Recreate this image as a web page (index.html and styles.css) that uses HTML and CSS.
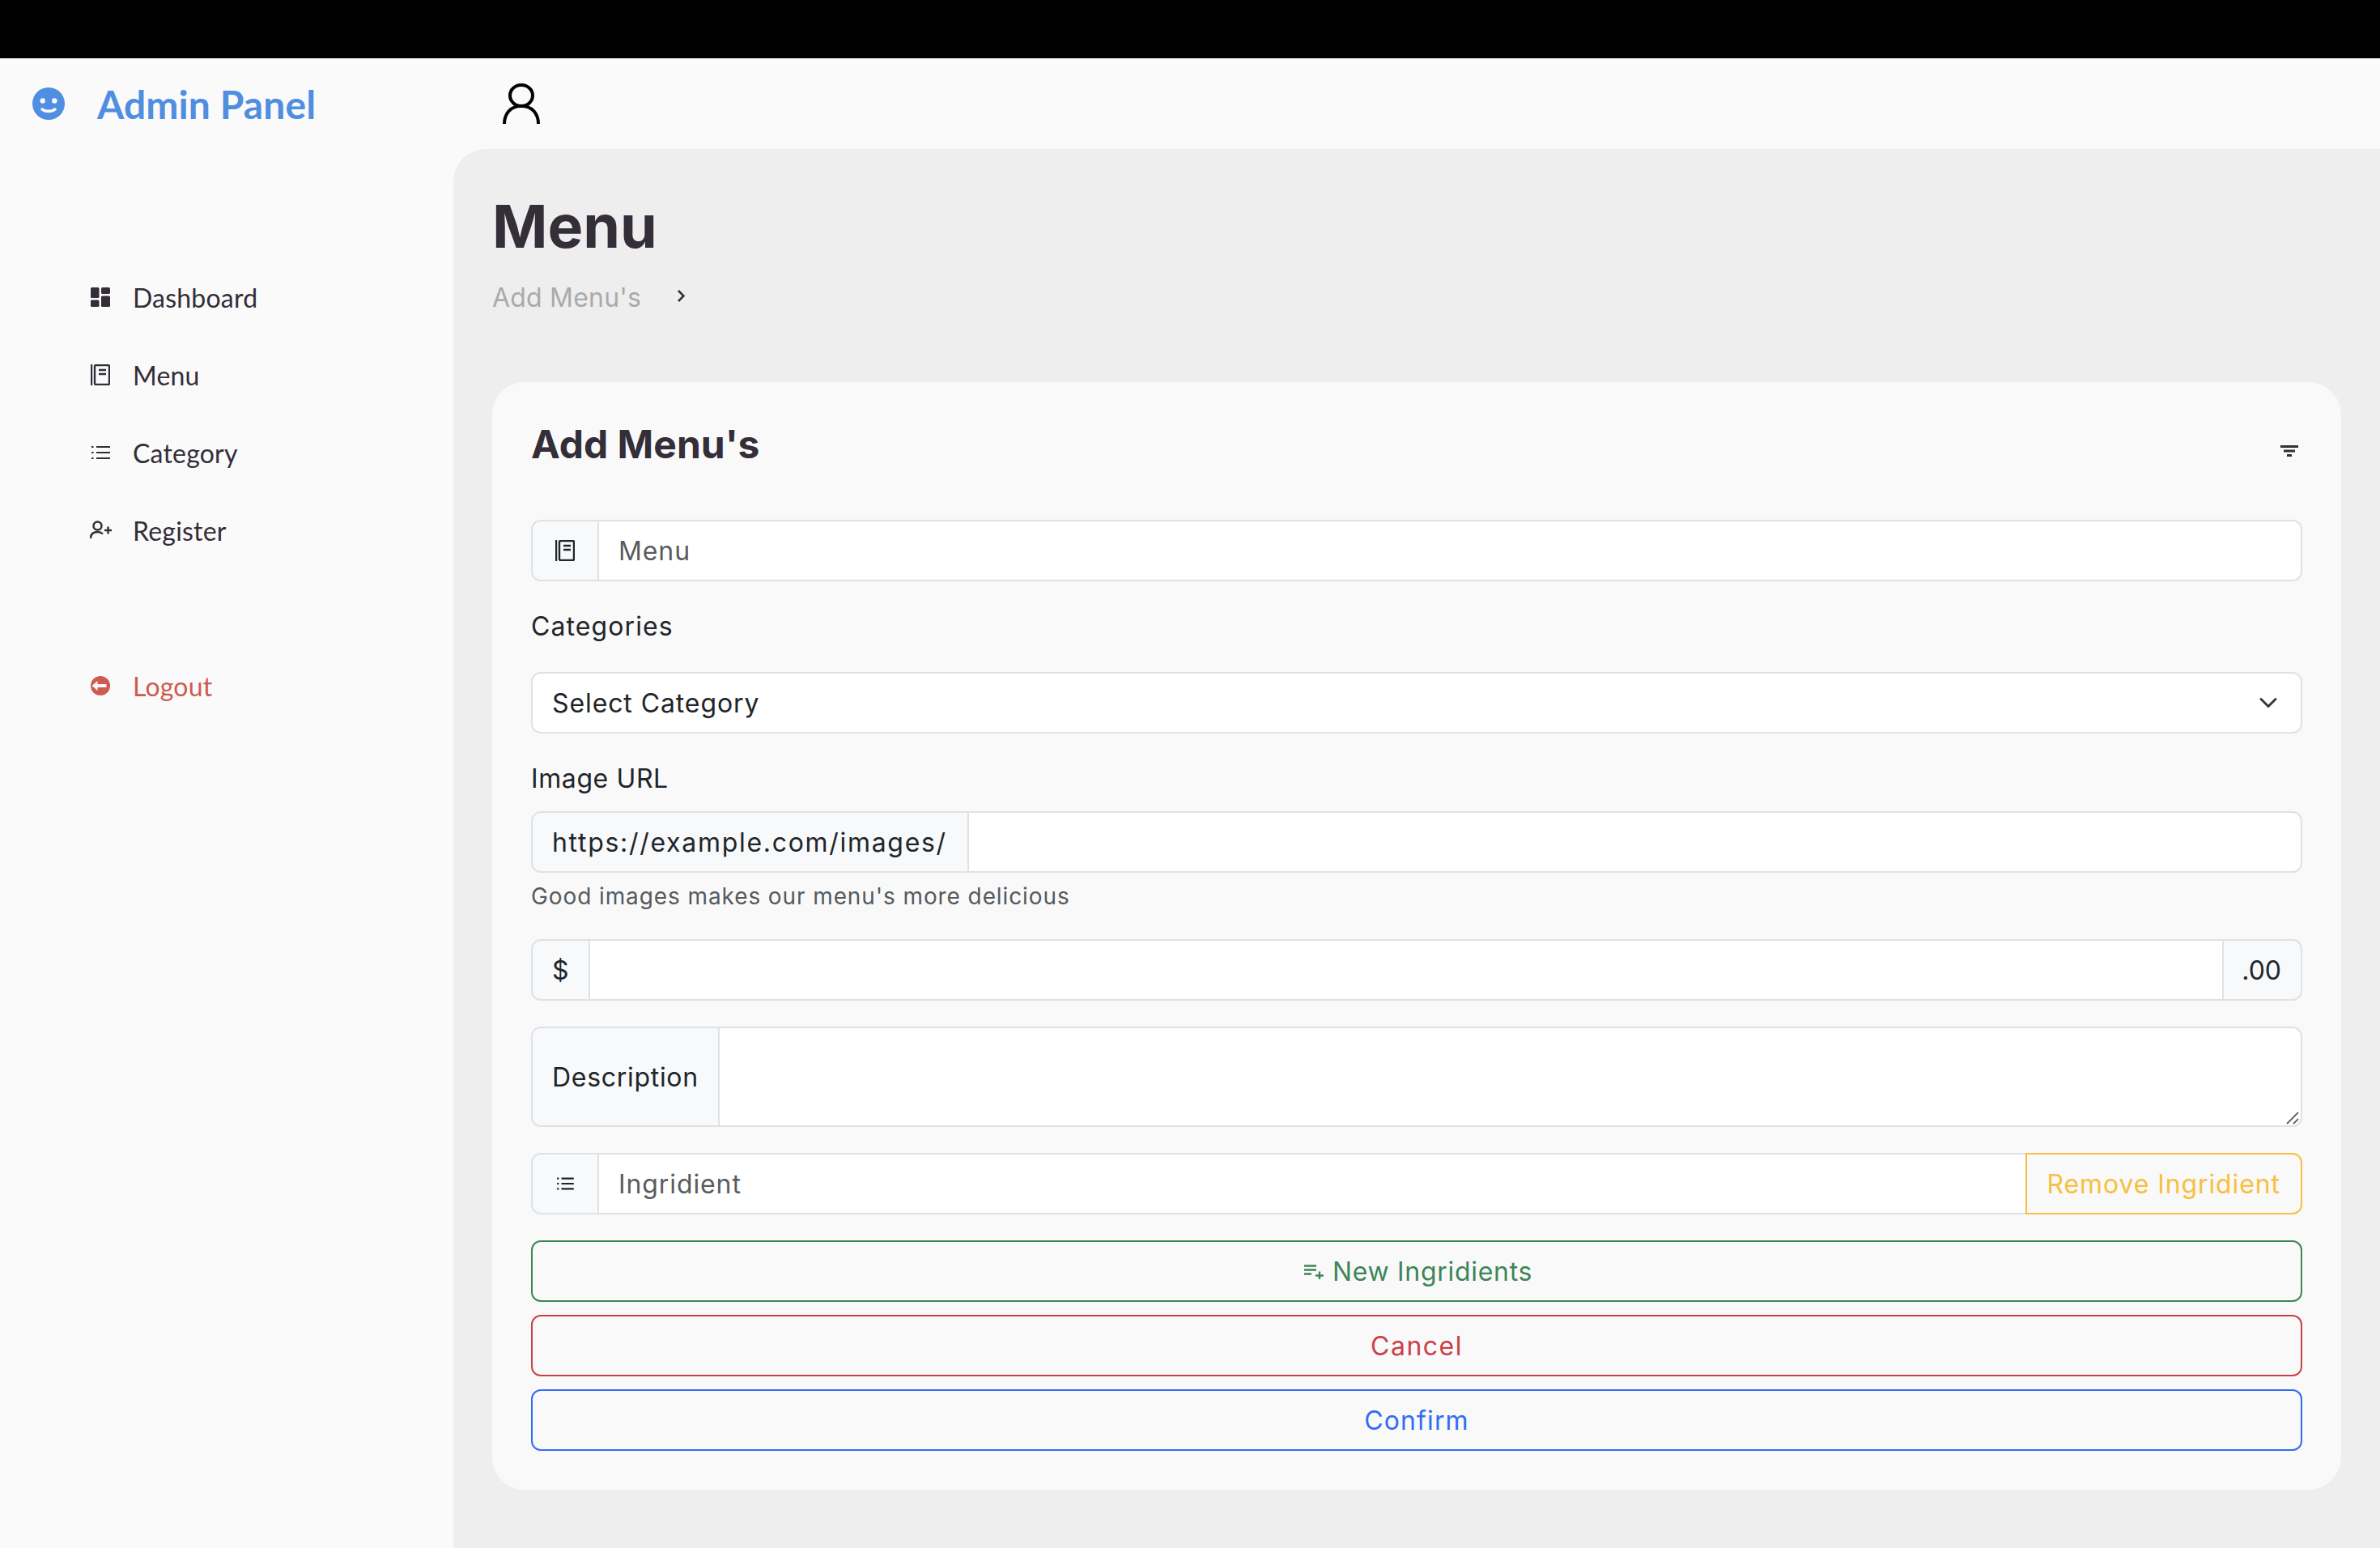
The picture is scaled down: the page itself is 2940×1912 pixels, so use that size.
FILE: index.html
```html
<!DOCTYPE html>
<html lang="en">
<head>
    <meta charset="UTF-8">
    <title>Admin Panel</title>
    <link rel="stylesheet" href="styles.css">
</head>
<body>

    <div class="top-strip"></div>

    <div class="shell">
        <div class="brand">
            <svg class="brand-icon" viewBox="0 0 40 40">
                <circle cx="20" cy="20" r="20" fill="#4f8ee0"/>
                <circle cx="12.7" cy="16.5" r="3.2" fill="#fafafa"/>
                <circle cx="27.3" cy="16.5" r="3.2" fill="#fafafa"/>
                <path d="M11 26c4.500 4.500 13.500 4.500 18 0" fill="none" stroke="#fafafa" stroke-width="3.6"/>
            </svg>
            <span class="brand-name">Admin Panel</span>
        </div>

        <div class="topbar">
            <svg class="user-icon" viewBox="0 0 46 50" fill="none" stroke="#000" stroke-width="4">
                <ellipse cx="23" cy="15" rx="14" ry="13"/>
                <path d="M2 50c0-13 8-22 21-22s21 9 21 22"/>
            </svg>
        </div>

        <nav class="sidebar">
            <a class="nav-item">
                <svg class="nav-icon" viewBox="0 0 24 24" fill="#332e38">
                    <rect x="0" y="0" width="10.500" height="13" rx="1.500"/>
                    <rect x="0" y="15.500" width="10.500" height="8.500" rx="1.500"/>
                    <rect x="13" y="0" width="11" height="8" rx="1.500"/>
                    <rect x="13" y="10.500" width="11" height="13.500" rx="1.500"/>
                </svg>
                Dashboard
            </a>
            <a class="nav-item">
                <svg class="nav-icon nav-icon-book" viewBox="0 0 24 26" fill="none" stroke="#332e38" stroke-width="2.400">
                    <path d="M1 0v26"/>
                    <rect x="5" y="1" width="18" height="24" rx="1.500"/>
                    <path d="M10 7h9M10 12h9"/>
                </svg>
                Menu
            </a>
            <a class="nav-item">
                <svg class="nav-icon" viewBox="0 0 24 20" fill="none" stroke="#332e38" stroke-width="2.200">
                    <path d="M7 3h17M7 10h17M7 17h17"/>
                    <path d="M1 3h2.500M1 10h2.500M1 17h2.500"/>
                </svg>
                Category
            </a>
            <a class="nav-item">
                <svg class="nav-icon nav-icon-wide" viewBox="0 0 27 24" fill="none" stroke="#332e38" stroke-width="2.400">
                    <circle cx="9.500" cy="6.500" r="5"/>
                    <path d="M1 22c0-5 3-8 8.500-8 2.500 0 5 1 6.500 2.500"/>
                    <path d="M18 12h9M22.500 7.500v9"/>
                </svg>
                Register
            </a>
            <a class="nav-item nav-logout">
                <svg class="nav-icon" viewBox="0 0 24 24">
                    <circle cx="12" cy="12" r="12" fill="#cf5a50"/>
                    <path d="M1.500 12l7-6v4h11v4h-11v4z" fill="#fafafa"/>
                </svg>
                Logout
            </a>
        </nav>

        <main class="content">
            <h1 class="page-title">Menu</h1>
            <div class="crumbs">
                <span class="crumb">Add Menu's</span>
                <svg class="crumb-sep" viewBox="0 0 9 15" fill="none" stroke="#332e38" stroke-width="2.600">
                    <path d="M1 1l6.500 6.500-6.500 6.500"/>
                </svg>
            </div>

            <section class="card">
                <div class="card-head">
                    <h3 class="card-title">Add Menu's</h3>
                    <svg class="filter-icon" viewBox="0 0 22 14" fill="#332e38">
                        <rect x="0" y="0" width="22" height="3"/>
                        <rect x="4" y="5.500" width="14" height="3"/>
                        <rect x="8" y="11" width="6" height="3"/>
                    </svg>
                </div>

                <div class="input-group">
                    <span class="addon addon-icon">
                        <svg class="addon-svg" viewBox="0 0 24 26" fill="none" stroke="#212529" stroke-width="2.400">
                            <path d="M1 0v26"/>
                            <rect x="5" y="1" width="18" height="24" rx="1.500"/>
                            <path d="M10 7h9M10 12h9"/>
                        </svg>
                    </span>
                    <input class="field" type="text" placeholder="Menu">
                </div>

                <label class="field-label">Categories</label>
                <select class="picker">
                    <option>Select Category</option>
                </select>

                <label class="field-label field-label-short">Image URL</label>
                <div class="input-group group-tight">
                    <span class="addon addon-url">https://example.com/images/</span>
                    <input class="field" type="text">
                </div>
                <div class="form-text">Good images makes our menu's more delicious</div>

                <div class="input-group">
                    <span class="addon addon-plain">$</span>
                    <input class="field" type="text">
                    <span class="addon addon-plain addon-end">.00</span>
                </div>

                <div class="input-group group-area">
                    <span class="addon addon-desc">Description</span>
                    <textarea class="field field-area"></textarea>
                    <svg class="area-grip" viewBox="0 0 16 16" fill="none" stroke="#666" stroke-width="1.800">
                        <path d="M1 15L15 1M9 15l6-6"/>
                    </svg>
                </div>

                <div class="input-group">
                    <span class="addon addon-icon">
                        <svg class="addon-svg addon-list" viewBox="0 0 24 20" fill="none" stroke="#212529" stroke-width="2.400">
                            <path d="M7 3h17M7 10h17M7 17h17"/>
                            <path d="M1 3h2.500M1 10h2.500M1 17h2.500"/>
                        </svg>
                    </span>
                    <input class="field" type="text" placeholder="Ingridient">
                    <button class="btn btn-remove">Remove Ingridient</button>
                </div>

                <button class="btn btn-wide btn-green">
                    <svg class="btn-icon" viewBox="0 0 24 18" fill="none" stroke="currentColor" stroke-width="2.400">
                        <path d="M0 1.500h15M0 6.500h15M0 11.500h9"/>
                        <path d="M14 13.500h10M19 8.500v9.500"/>
                    </svg>
                    New Ingridients
                </button>
                <button class="btn btn-wide btn-red">Cancel</button>
                <button class="btn btn-wide btn-blue">Confirm</button>
            </section>
        </main>
    </div>

</body>
</html>
```

FILE: styles.css
```css
* {
    box-sizing: border-box;
}

html, body {
    margin: 0;
    height: 1912px;
    overflow: hidden;
}

body {
    background: #fafafa;
    font-family: Inter, "Liberation Sans", sans-serif;
    font-size: 32px;
    color: #212529;
    display: flex;
    flex-direction: column;
}

.top-strip {
    height: 72px;
    flex: none;
    background: #000;
}

.shell {
    flex: 1;
    display: grid;
    grid-template-columns: 560px 1fr;
    grid-template-rows: 112px 1fr;
    min-height: 0;
}

/* header row */
.brand {
    display: flex;
    align-items: center;
    gap: 40px;
    padding-left: 40px;
    font-family: Lato, sans-serif;
}

.brand-icon {
    width: 40px;
    height: 40px;
}

.brand-name {
    font-size: 48px;
    font-weight: 700;
    color: #4f8ee0;
    letter-spacing: 0.1px;
}

.topbar {
    display: flex;
    align-items: center;
    padding-left: 61px;
}

.user-icon {
    width: 46px;
    height: 50px;
}

/* sidebar */
.sidebar {
    padding-top: 135px;
    font-family: Lato, sans-serif;
}

.nav-item {
    height: 96px;
    display: flex;
    align-items: center;
    gap: 28px;
    padding-left: 112px;
    font-size: 32px;
    color: #332e38;
    letter-spacing: 0.2px;
}

.nav-icon {
    width: 24px;
    height: 24px;
    flex: none;
}

.nav-icon-book {
    height: 26px;
}

.nav-icon-wide {
    width: 27px;
    margin-left: -1px;
    margin-right: -2px;
}

.nav-logout {
    margin-top: 96px;
    color: #cf5a50;
}

/* main area */
.content {
    background: #eeeeee;
    border-top-left-radius: 40px;
    padding: 48px 48px 0;
}

.page-title {
    margin: 0;
    font-size: 73.5px;
    line-height: 96px;
    font-weight: 700;
    color: #332e38;
}

.crumbs {
    margin-top: 15px;
    height: 48px;
    display: flex;
    align-items: center;
    gap: 45px;
}

.crumb {
    color: #aaaaaa;
    font-size: 32px;
    letter-spacing: 0.2px;
}

.crumb-sep {
    width: 9px;
    height: 15px;
    margin-top: -4px;
}

.card {
    margin-top: 81px;
    background: #f9f9f9;
    border-radius: 40px;
    padding: 48px;
    letter-spacing: 0.9px;
}

.card-head {
    height: 56px;
    margin-bottom: 66px;
    display: flex;
    align-items: center;
    justify-content: space-between;
}

.card-title {
    margin: 0;
    font-size: 48px;
    font-weight: 700;
    letter-spacing: 0;
    color: #332e38;
}

.filter-icon {
    width: 22px;
    height: 14px;
    margin-right: 5px;
    margin-top: 17px;
}

/* form */
.input-group {
    display: flex;
    margin-bottom: 32px;
}

.group-tight {
    margin-bottom: 8px;
}

.group-area {
    position: relative;
}

.addon {
    flex: none;
    display: flex;
    align-items: center;
    padding: 0 24px;
    background: #f8f9fa;
    border: 2px solid #dee2e6;
    border-radius: 12px 0 0 12px;
    white-space: nowrap;
}

.addon-url {
    letter-spacing: 1.7px;
    padding-right: 25px;
}

.addon-desc {
    letter-spacing: 0.7px;
}

.addon-plain {
    letter-spacing: 0;
}

.addon-end {
    padding-left: 22px;
    border-radius: 0 12px 12px 0;
    border-left: 2px solid #dee2e6;
}

.addon-icon {
    width: 84px;
    padding: 0;
    justify-content: center;
}

.addon-svg {
    width: 24px;
    height: 26px;
}

.addon-list {
    height: 18px;
    width: 22px;
}

.field {
    flex: 1;
    min-width: 0;
    height: 76px;
    padding: 0 24px;
    background: #fff;
    border: 2px solid #dee2e6;
    border-left: 0;
    border-radius: 0 12px 12px 0;
    font: inherit;
    letter-spacing: inherit;
    color: #212529;
    outline: none;
}

.field:has(+ .addon-end),
.field:has(+ .btn-remove) {
    border-radius: 0;
    border-right: 0;
}

.field::placeholder {
    color: #595c5f;
    opacity: 1;
}

.field-area {
    height: 124px;
    padding: 14px 24px;
    display: block;
    resize: none;
}

.area-grip {
    position: absolute;
    right: 4px;
    bottom: 3px;
    width: 16px;
    height: 16px;
}

.field-label {
    display: block;
    line-height: 48px;
    margin-bottom: 32px;
    letter-spacing: 1.1px;
}

.field-label-short {
    margin-bottom: 16px;
    letter-spacing: 0.6px;
}

.picker {
    display: block;
    width: 100%;
    height: 76px;
    margin-bottom: 32px;
    padding: 0 72px 0 24px;
    appearance: none;
    background: #fff url("data:image/svg+xml,%3csvg xmlns='http://www.w3.org/2000/svg' viewBox='0 0 16 16'%3e%3cpath fill='none' stroke='%23343a40' stroke-linecap='round' stroke-linejoin='round' stroke-width='2' d='m2 5 6 6 6-6'/%3e%3c/svg%3e") no-repeat right 24px center / 32px 24px;
    border: 2px solid #dee2e6;
    border-radius: 12px;
    font: inherit;
    letter-spacing: inherit;
    color: #212529;
}

.form-text {
    font-size: 28px;
    line-height: 42px;
    color: #555a5e;
    margin-bottom: 32px;
}

.btn {
    height: 76px;
    padding: 0 24px;
    background: transparent;
    border: 2px solid;
    font: inherit;
    letter-spacing: inherit;
    white-space: nowrap;
}

.btn-remove {
    flex: none;
    padding: 0 25px;
    border-color: #f7c040;
    color: #f7c040;
    border-radius: 0 12px 12px 0;
}

.btn-wide {
    display: flex;
    align-items: center;
    justify-content: center;
    gap: 12px;
    width: 100%;
    margin-bottom: 16px;
    border-radius: 12px;
}

.btn-icon {
    width: 24px;
    height: 18px;
    margin-top: 2px;
}

.btn-green {
    padding-left: 28px;
    gap: 11px;
    color: #3e8558;
    letter-spacing: 0.7px;
}

.btn-red {
    color: #cb4048;
    letter-spacing: 1.5px;
}

.btn-blue {
    color: #2f6df5;
    margin-bottom: 0;
    letter-spacing: 1.1px;
}
```
